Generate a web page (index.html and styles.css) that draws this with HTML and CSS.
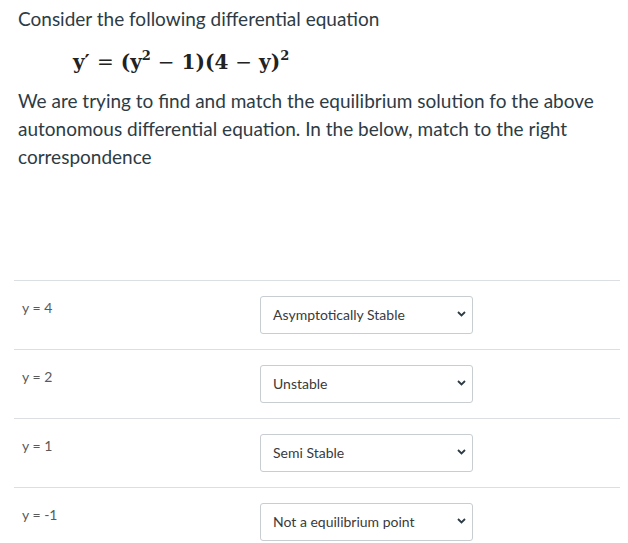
FILE: index.html
```html
<!DOCTYPE html>
<html>
<head>
<meta charset="utf-8">
<link rel="stylesheet" href="styles.css">
</head>
<body>
<div class="question">
  <p class="title">Consider the following differential equation</p>
  <div class="equation">y′<span class="op">=</span>(y<sup>2</sup><span class="op">−</span>1)(4<span class="op">−</span>y)<sup>2</sup></div>
  <p class="body-text">We are trying to find and match the equilibrium solution fo the above autonomous differential equation. In the below, match to the right correspondence</p>
</div>
<div class="matches">
  <div class="row">
    <div class="label">y = 4</div>
    <div class="select"><span>Asymptotically Stable</span><svg class="chev" width="9" height="6" viewBox="0 0 9 6"><path d="M1 1 L4.5 4.5 L8 1" fill="none" stroke="#2d3b45" stroke-width="1.8"/></svg></div>
  </div>
  <div class="row">
    <div class="label">y = 2</div>
    <div class="select"><span>Unstable</span><svg class="chev" width="9" height="6" viewBox="0 0 9 6"><path d="M1 1 L4.5 4.5 L8 1" fill="none" stroke="#2d3b45" stroke-width="1.8"/></svg></div>
  </div>
  <div class="row">
    <div class="label">y = 1</div>
    <div class="select"><span>Semi Stable</span><svg class="chev" width="9" height="6" viewBox="0 0 9 6"><path d="M1 1 L4.5 4.5 L8 1" fill="none" stroke="#2d3b45" stroke-width="1.8"/></svg></div>
  </div>
  <div class="row">
    <div class="label">y = -1</div>
    <div class="select"><span>Not a equilibrium point</span><svg class="chev" width="9" height="6" viewBox="0 0 9 6"><path d="M1 1 L4.5 4.5 L8 1" fill="none" stroke="#2d3b45" stroke-width="1.8"/></svg></div>
  </div>
</div>
</body>
</html>
```
FILE: styles.css
```css
html, body {
  margin: 0;
  padding: 0;
  background: #fff;
}
body {
  font-family: Lato, "Open Sans", sans-serif;
  color: #2d3b45;
}
.question {
  padding: 5px 18px 0 18px;
}
.title {
  margin: 0;
  font-size: 19px;
  line-height: 28px;
  color: #2d3b45;
}
.equation {
  font-family: "DejaVu Serif", "Liberation Serif", serif;
  font-weight: bold;
  font-size: 20px;
  line-height: 28px;
  margin-top: 15px;
  padding-left: 55px;
  color: #222;
}
.equation .op {
  font-weight: normal;
  padding: 0 7px;
}
.equation sup {
  font-size: 13px;
  line-height: 0;
  vertical-align: 9px;
}
.body-text {
  margin: 11px 0 0 0;
  font-size: 19px;
  line-height: 28px;
  color: #2d3b45;
}
.matches {
  margin: 109px 8px 0 14px;
}
.row {
  display: flex;
  align-items: flex-start;
  border-top: 1px solid #dcdfe2;
  height: 69px;
  padding-top: 15px;
  box-sizing: border-box;
}
.label {
  width: 246px;
  box-sizing: border-box;
  padding-left: 8px;
  padding-top: 3px;
  font-size: 14px;
  line-height: 18px;
  color: #5a5a5a;
}
.select {
  width: 213px;
  height: 38px;
  box-sizing: border-box;
  border: 1px solid #c7cdd1;
  border-radius: 3px;
  display: flex;
  align-items: center;
  justify-content: space-between;
  padding: 0 6px 2px 12px;
  font-size: 14px;
  color: #3a3a3a;
}
.chev {
  display: block;
}
```
